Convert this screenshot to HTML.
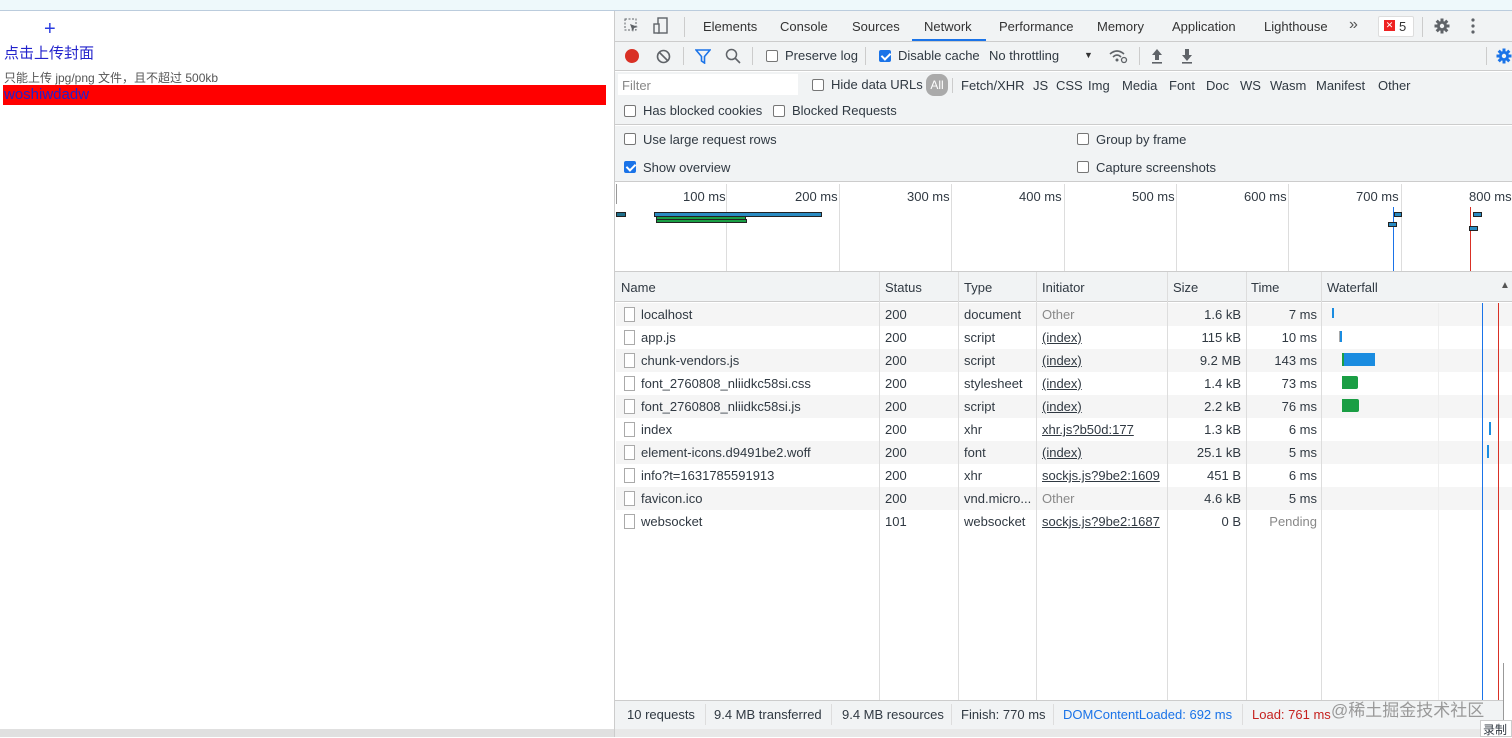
<!DOCTYPE html>
<html><head><meta charset="utf-8">
<style>
*{box-sizing:border-box;margin:0;padding:0}
body{width:1512px;height:737px;overflow:hidden;background:#fff;font-family:"Liberation Sans","Noto Sans CJK SC",sans-serif;font-size:13px;color:#303942;position:relative}
.a{position:absolute;white-space:nowrap}
.cb{position:absolute;width:12px;height:12px;border:1px solid #767676;border-radius:2px;background:#fff}
.cbc{background:#1a73e8;border-color:#1a73e8}
.cbc:after{content:"";position:absolute;left:3px;top:0px;width:4px;height:7px;border:solid #fff;border-width:0 2px 2px 0;transform:rotate(45deg)}
.vl{position:absolute;width:1px;background:#ddd}
.row{position:absolute;left:616px;width:896px;height:23px}
.row span{position:absolute;top:4px;white-space:nowrap}
.u{text-decoration:underline}
.fi{position:absolute;left:8px;top:4px;width:11px;height:15px;border:1px solid #aaa;background:#fff}
</style></head><body>
<svg width="0" height="0" style="position:absolute"><defs><g id="gear"><circle cx="8" cy="8" r="5" fill="currentColor"/><g stroke="currentColor" stroke-width="3"><line x1="8" y1="0.5" x2="8" y2="15.5"/><line x1="0.5" y1="8" x2="15.5" y2="8"/><line x1="2.7" y1="2.7" x2="13.3" y2="13.3"/><line x1="13.3" y1="2.7" x2="2.7" y2="13.3"/></g><circle cx="8" cy="8" r="2.2" fill="#f1f3f4"/></g></defs></svg>
<div class="a" style="left:0;top:0;width:1512px;height:11px;background:#eef9fb;border-bottom:1px solid #bcd"></div>
<div class="a" style="left:44px;top:18px;font-size:20px;color:#2a3ce0">+</div>
<div class="a" style="left:4px;top:42px;font-size:15px;color:#2222cc">点击上传封面</div>
<div class="a" style="left:4px;top:69px;font-size:12px;color:#555">只能上传 jpg/png 文件，且不超过 500kb</div>
<div class="a" style="left:3px;top:85px;width:603px;height:20px;background:#f00;color:#2222cc;font-size:15px;padding-left:1px;line-height:20px">woshiwdadw</div>
<div class="a" style="left:0;top:729px;width:614px;height:8px;background:#e0e0e0"></div>
<div class="a" style="left:614px;top:11px;width:898px;height:726px;background:#fff;border-left:1px solid #ccc"></div>
<div class="a" style="left:615px;top:11px;width:897px;height:31px;background:#f1f3f4;border-bottom:1px solid #ccc"></div>
<svg class="a" style="left:624px;top:18px" width="16" height="16"><rect x="1" y="1" width="11" height="11" fill="none" stroke="#5f6368" stroke-dasharray="2 1.5"/><path d="M6 6 L14 9 L10 10 L9 14 Z" fill="#5f6368"/></svg>
<svg class="a" style="left:653px;top:17px" width="16" height="18"><rect x="5" y="1" width="9" height="15" fill="none" stroke="#5f6368" stroke-width="1.4"/><rect x="1" y="7" width="5" height="9" fill="#f1f3f4" stroke="#5f6368" stroke-width="1.4"/></svg>
<div class="vl" style="left:684px;top:17px;height:20px;background:#ccc"></div>
<div class="a" style="left:703px;top:19px;color:#333">Elements</div>
<div class="a" style="left:780px;top:19px;color:#333">Console</div>
<div class="a" style="left:852px;top:19px;color:#333">Sources</div>
<div class="a" style="left:924px;top:19px;color:#333">Network</div>
<div class="a" style="left:912px;top:39px;width:74px;height:2px;background:#1a73e8"></div>
<div class="a" style="left:999px;top:19px;color:#333">Performance</div>
<div class="a" style="left:1097px;top:19px;color:#333">Memory</div>
<div class="a" style="left:1172px;top:19px;color:#333">Application</div>
<div class="a" style="left:1264px;top:19px;color:#333">Lighthouse</div>
<div class="a" style="left:1349px;top:16px;font-size:16px;color:#555">»</div>
<div class="a" style="left:1378px;top:16px;width:36px;height:21px;border:1px solid #ddd;border-radius:2px;background:#fff"></div>
<div class="a" style="left:1384px;top:20px;width:11px;height:11px;background:#e22;color:#fff;font-size:9px;line-height:11px;text-align:center">✕</div>
<div class="a" style="left:1399px;top:19px;color:#333">5</div>
<div class="vl" style="left:1422px;top:17px;height:20px;background:#ccc"></div>
<svg class="a" style="left:1434px;top:18px;color:#5f6368" width="16" height="16"><use href="#gear"/></svg>
<svg class="a" style="left:1471px;top:18px" width="4" height="16"><circle cx="2" cy="2" r="1.6" fill="#5f6368"/><circle cx="2" cy="8" r="1.6" fill="#5f6368"/><circle cx="2" cy="14" r="1.6" fill="#5f6368"/></svg>
<div class="a" style="left:615px;top:42px;width:897px;height:29px;background:#f1f3f4;border-bottom:1px solid #ccc"></div>
<div class="a" style="left:625px;top:49px;width:14px;height:14px;border-radius:50%;background:#d93025"></div>
<svg class="a" style="left:656px;top:49px" width="15" height="15"><circle cx="7.5" cy="7.5" r="6" fill="none" stroke="#5f6368" stroke-width="1.6"/><line x1="3.5" y1="3.5" x2="11.5" y2="11.5" stroke="#5f6368" stroke-width="1.6"/></svg>
<div class="vl" style="left:683px;top:47px;height:18px;background:#ccc"></div>
<svg class="a" style="left:695px;top:49px" width="16" height="15"><path d="M1 1 H15 L9.5 7.5 V14 L6.5 12 V7.5 Z" fill="none" stroke="#1a73e8" stroke-width="1.6"/></svg>
<svg class="a" style="left:725px;top:48px" width="16" height="16"><circle cx="6.5" cy="6.5" r="5" fill="none" stroke="#5f6368" stroke-width="1.5"/><line x1="10" y1="10" x2="15" y2="15" stroke="#5f6368" stroke-width="1.6"/></svg>
<div class="vl" style="left:752px;top:47px;height:18px;background:#ccc"></div>
<div class="cb" style="left:766px;top:50px"></div>
<div class="a" style="left:785px;top:48px">Preserve log</div>
<div class="vl" style="left:865px;top:47px;height:18px;background:#ccc"></div>
<div class="cb cbc" style="left:879px;top:50px"></div>
<div class="a" style="left:898px;top:48px">Disable cache</div>
<div class="a" style="left:989px;top:48px">No throttling</div>
<div class="a" style="left:1084px;top:50px;font-size:9px;color:#333">▼</div>
<svg class="a" style="left:1108px;top:48px" width="20" height="16"><path d="M2 6 Q9 0 16 6" fill="none" stroke="#5f6368" stroke-width="1.6"/><path d="M5 9 Q9 5 13 9" fill="none" stroke="#5f6368" stroke-width="1.6"/><circle cx="9" cy="12" r="1.5" fill="#5f6368"/><circle cx="16" cy="12" r="2.5" fill="none" stroke="#5f6368" stroke-width="1.3"/></svg>
<div class="vl" style="left:1139px;top:47px;height:18px;background:#ccc"></div>
<svg class="a" style="left:1150px;top:48px" width="14" height="16"><path d="M7 1 L12 7 H9 V12 H5 V7 H2 Z" fill="#5f6368"/><rect x="2" y="14" width="10" height="1.6" fill="#5f6368"/></svg>
<svg class="a" style="left:1180px;top:48px" width="14" height="16"><path d="M7 13 L12 7 H9 V1 H5 V7 H2 Z" fill="#5f6368"/><rect x="2" y="14" width="10" height="1.6" fill="#5f6368"/></svg>
<div class="vl" style="left:1486px;top:47px;height:18px;background:#ccc"></div>
<svg class="a" style="left:1496px;top:48px;color:#1a73e8" width="16" height="16"><use href="#gear"/></svg>
<div class="a" style="left:615px;top:72px;width:897px;height:53px;background:#f1f3f4;border-bottom:1px solid #ccc"></div>
<div class="a" style="left:618px;top:74px;width:180px;height:21px;background:#fff"></div>
<div class="a" style="left:622px;top:78px;color:#888">Filter</div>
<div class="cb" style="left:812px;top:79px"></div>
<div class="a" style="left:831px;top:77px">Hide data URLs</div>
<div class="a" style="left:926px;top:74px;width:22px;height:22px;border-radius:8px;background:#aaa;color:#fff;font-size:12px;text-align:center;line-height:22px">All</div>
<div class="vl" style="left:952px;top:78px;height:15px;background:#ccc"></div>
<div class="a" style="left:961px;top:78px">Fetch/XHR</div>
<div class="a" style="left:1033px;top:78px">JS</div>
<div class="a" style="left:1056px;top:78px">CSS</div>
<div class="a" style="left:1088px;top:78px">Img</div>
<div class="a" style="left:1122px;top:78px">Media</div>
<div class="a" style="left:1169px;top:78px">Font</div>
<div class="a" style="left:1206px;top:78px">Doc</div>
<div class="a" style="left:1240px;top:78px">WS</div>
<div class="a" style="left:1270px;top:78px">Wasm</div>
<div class="a" style="left:1316px;top:78px">Manifest</div>
<div class="a" style="left:1378px;top:78px">Other</div>
<div class="cb" style="left:624px;top:105px"></div>
<div class="a" style="left:643px;top:103px">Has blocked cookies</div>
<div class="cb" style="left:773px;top:105px"></div>
<div class="a" style="left:792px;top:103px">Blocked Requests</div>
<div class="a" style="left:615px;top:126px;width:897px;height:56px;background:#f1f3f4;border-bottom:1px solid #ccc"></div>
<div class="cb" style="left:624px;top:133px"></div>
<div class="a" style="left:643px;top:132px">Use large request rows</div>
<div class="cb cbc" style="left:624px;top:161px"></div>
<div class="a" style="left:643px;top:160px">Show overview</div>
<div class="cb" style="left:1077px;top:133px"></div>
<div class="a" style="left:1096px;top:132px">Group by frame</div>
<div class="cb" style="left:1077px;top:161px"></div>
<div class="a" style="left:1096px;top:160px">Capture screenshots</div>
<div class="vl" style="left:616px;top:184px;height:20px;background:#999"></div>
<div class="vl" style="left:726px;top:184px;height:87px"></div>
<div class="vl" style="left:839px;top:184px;height:87px"></div>
<div class="vl" style="left:951px;top:184px;height:87px"></div>
<div class="vl" style="left:1064px;top:184px;height:87px"></div>
<div class="vl" style="left:1176px;top:184px;height:87px"></div>
<div class="vl" style="left:1288px;top:184px;height:87px"></div>
<div class="vl" style="left:1401px;top:184px;height:87px"></div>
<div class="a" style="left:683px;top:189px">100 ms</div>
<div class="a" style="left:795px;top:189px">200 ms</div>
<div class="a" style="left:907px;top:189px">300 ms</div>
<div class="a" style="left:1019px;top:189px">400 ms</div>
<div class="a" style="left:1132px;top:189px">500 ms</div>
<div class="a" style="left:1244px;top:189px">600 ms</div>
<div class="a" style="left:1356px;top:189px">700 ms</div>
<div class="a" style="left:1469px;top:189px">800 ms</div>
<div class="a" style="left:616px;top:212px;width:10px;height:5px;background:#1f6f8b;border:1px solid #222"></div>
<div class="a" style="left:654px;top:212px;width:168px;height:5px;background:#2a8bc2;border:1px solid #222"></div>
<div class="a" style="left:656px;top:216px;width:90px;height:4px;background:#1a9e44;border:1px solid #222"></div>
<div class="a" style="left:656px;top:219px;width:91px;height:4px;background:#1a9e44;border:1px solid #222"></div>
<div class="vl" style="left:1393px;top:207px;height:64px;background:#1a73e8"></div>
<div class="vl" style="left:1470px;top:207px;height:64px;background:#d93025"></div>
<div class="a" style="left:1394px;top:212px;width:8px;height:5px;background:#2a8bc2;border:1px solid #222"></div>
<div class="a" style="left:1388px;top:222px;width:9px;height:5px;background:#2a8bc2;border:1px solid #222"></div>
<div class="a" style="left:1473px;top:212px;width:9px;height:5px;background:#2a8bc2;border:1px solid #222"></div>
<div class="a" style="left:1469px;top:226px;width:9px;height:5px;background:#2a8bc2;border:1px solid #222"></div>
<div class="a" style="left:615px;top:271px;width:897px;height:31px;background:#f1f3f4;border-top:1px solid #ccc;border-bottom:1px solid #ccc"></div>
<div class="a" style="left:621px;top:280px">Name</div>
<div class="a" style="left:885px;top:280px">Status</div>
<div class="a" style="left:964px;top:280px">Type</div>
<div class="a" style="left:1042px;top:280px">Initiator</div>
<div class="a" style="left:1173px;top:280px">Size</div>
<div class="a" style="left:1251px;top:280px">Time</div>
<div class="a" style="left:1327px;top:280px">Waterfall</div>
<div class="a" style="left:1500px;top:280px;font-size:10px;color:#555">▲</div>
<div class="row" style="top:303px;background:#f5f5f5"><div class="fi"></div><span style="left:25px">localhost</span><span style="left:269px">200</span><span style="left:348px">document</span><span style="left:426px;color:#888">Other</span><span style="right:271px">1.6 kB</span><span style="right:195px">7 ms</span></div>
<div class="row" style="top:326px"><div class="fi"></div><span style="left:25px">app.js</span><span style="left:269px">200</span><span style="left:348px">script</span><span style="left:426px" class="u">(index)</span><span style="right:271px">115 kB</span><span style="right:195px">10 ms</span></div>
<div class="row" style="top:349px;background:#f5f5f5"><div class="fi"></div><span style="left:25px">chunk-vendors.js</span><span style="left:269px">200</span><span style="left:348px">script</span><span style="left:426px" class="u">(index)</span><span style="right:271px">9.2 MB</span><span style="right:195px">143 ms</span></div>
<div class="row" style="top:372px"><div class="fi"></div><span style="left:25px">font_2760808_nliidkc58si.css</span><span style="left:269px">200</span><span style="left:348px">stylesheet</span><span style="left:426px" class="u">(index)</span><span style="right:271px">1.4 kB</span><span style="right:195px">73 ms</span></div>
<div class="row" style="top:395px;background:#f5f5f5"><div class="fi"></div><span style="left:25px">font_2760808_nliidkc58si.js</span><span style="left:269px">200</span><span style="left:348px">script</span><span style="left:426px" class="u">(index)</span><span style="right:271px">2.2 kB</span><span style="right:195px">76 ms</span></div>
<div class="row" style="top:418px"><div class="fi"></div><span style="left:25px">index</span><span style="left:269px">200</span><span style="left:348px">xhr</span><span style="left:426px" class="u">xhr.js?b50d:177</span><span style="right:271px">1.3 kB</span><span style="right:195px">6 ms</span></div>
<div class="row" style="top:441px;background:#f5f5f5"><div class="fi"></div><span style="left:25px">element-icons.d9491be2.woff</span><span style="left:269px">200</span><span style="left:348px">font</span><span style="left:426px" class="u">(index)</span><span style="right:271px">25.1 kB</span><span style="right:195px">5 ms</span></div>
<div class="row" style="top:464px"><div class="fi"></div><span style="left:25px">info?t=1631785591913</span><span style="left:269px">200</span><span style="left:348px">xhr</span><span style="left:426px" class="u">sockjs.js?9be2:1609</span><span style="right:271px">451 B</span><span style="right:195px">6 ms</span></div>
<div class="row" style="top:487px;background:#f5f5f5"><div class="fi"></div><span style="left:25px">favicon.ico</span><span style="left:269px">200</span><span style="left:348px">vnd.micro...</span><span style="left:426px;color:#888">Other</span><span style="right:271px">4.6 kB</span><span style="right:195px">5 ms</span></div>
<div class="row" style="top:510px"><div class="fi"></div><span style="left:25px">websocket</span><span style="left:269px">101</span><span style="left:348px">websocket</span><span style="left:426px" class="u">sockjs.js?9be2:1687</span><span style="right:271px">0 B</span><span style="right:195px;color:#888">Pending</span></div>
<div class="vl" style="left:879px;top:272px;height:428px"></div>
<div class="vl" style="left:958px;top:272px;height:428px"></div>
<div class="vl" style="left:1036px;top:272px;height:428px"></div>
<div class="vl" style="left:1167px;top:272px;height:428px"></div>
<div class="vl" style="left:1246px;top:272px;height:428px"></div>
<div class="vl" style="left:1321px;top:272px;height:428px"></div>
<div class="vl" style="left:1438px;top:303px;height:397px;background:#eee"></div>
<div class="vl" style="left:1482px;top:303px;height:397px;background:#1a73e8"></div>
<div class="vl" style="left:1498px;top:303px;height:397px;background:#d93025"></div>
<div class="a" style="left:1332px;top:308px;width:2px;height:10px;background:#1a8ce0"></div>
<div class="a" style="left:1339px;top:331px;width:3px;height:11px;background:#1a8ce0;border-left:1px solid #aaa"></div>
<div class="a" style="left:1342px;top:353px;width:33px;height:13px;background:#1a8ce0;border-left:2px solid #1a9e44"></div>
<div class="a" style="left:1342px;top:376px;width:16px;height:13px;background:#1a9e44;border-radius:0 2px 2px 0"></div>
<div class="a" style="left:1342px;top:399px;width:17px;height:13px;background:#1a9e44;border-radius:0 2px 2px 0"></div>
<div class="a" style="left:1489px;top:422px;width:2px;height:13px;background:#1a8ce0"></div>
<div class="a" style="left:1487px;top:445px;width:2px;height:13px;background:#1a8ce0"></div>
<div class="a" style="left:615px;top:700px;width:897px;height:29px;background:#f1f3f4;border-top:1px solid #ccc"></div>
<div class="a" style="left:627px;top:707px">10 requests</div>
<div class="vl" style="left:705px;top:704px;height:21px"></div>
<div class="a" style="left:714px;top:707px">9.4 MB transferred</div>
<div class="vl" style="left:831px;top:704px;height:21px"></div>
<div class="a" style="left:842px;top:707px">9.4 MB resources</div>
<div class="vl" style="left:951px;top:704px;height:21px"></div>
<div class="a" style="left:961px;top:707px">Finish: 770 ms</div>
<div class="vl" style="left:1053px;top:704px;height:21px"></div>
<div class="a" style="left:1063px;top:707px;color:#1a73e8">DOMContentLoaded: 692 ms</div>
<div class="vl" style="left:1242px;top:704px;height:21px"></div>
<div class="a" style="left:1252px;top:707px;color:#c5221f">Load: 761 ms</div>
<div class="a" style="left:1331px;top:696px;font-size:17px;color:#999">@稀土掘金技术社区</div>
<div class="a" style="left:615px;top:729px;width:897px;height:8px;background:#e8e8e8"></div>
<div class="a" style="left:1503px;top:663px;width:9px;height:74px;background:#fff;border-left:1px solid #999"></div>
<div class="a" style="left:1480px;top:720px;width:32px;height:17px;background:#fff;border:1px solid #ccc;font-size:12px;padding-left:2px">录制</div>
</body></html>
